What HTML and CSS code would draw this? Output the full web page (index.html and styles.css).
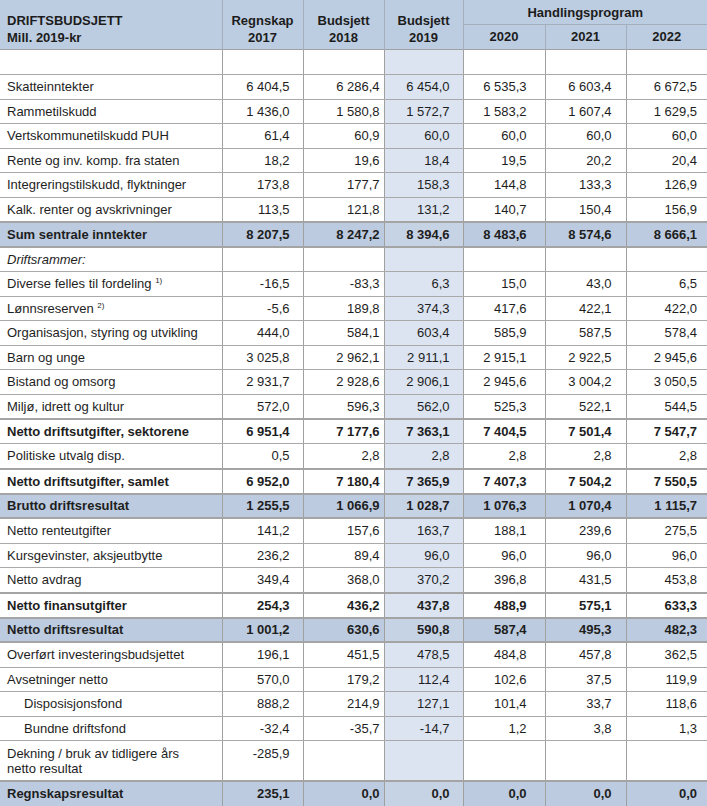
FILE: index.html
```html
<!DOCTYPE html>
<html lang="no">
<head>
<meta charset="utf-8">
<title>Driftsbudsjett</title>
<link rel="stylesheet" href="styles.css">
</head>
<body>
<table class="budget">
  <colgroup>
    <col class="c-label">
    <col class="c-n1">
    <col class="c-n2">
    <col class="c-n3">
    <col class="c-n4">
    <col class="c-n5">
    <col class="c-n6">
  </colgroup>
  <thead>
    <tr class="h1">
      <th rowspan="2" class="title">DRIFTSBUDSJETT<br>Mill. 2019-kr</th>
      <th rowspan="2" class="hc">Regnskap<br>2017</th>
      <th rowspan="2" class="hc">Budsjett<br>2018</th>
      <th rowspan="2" class="hc hl">Budsjett<br>2019</th>
      <th colspan="3" class="group">Handlingsprogram</th>
    </tr>
    <tr class="h2">
      <th class="yr">2020</th>
      <th class="yr">2021</th>
      <th class="yr">2022</th>
    </tr>
  </thead>
  <tbody>
    <tr class="empty"><td></td><td></td><td></td><td class="hl"></td><td></td><td></td><td></td></tr>
    <tr><td>Skatteinntekter</td><td class="n1">6 404,5</td><td class="n2">6 286,4</td><td class="n3 hl">6 454,0</td><td class="n4">6 535,3</td><td class="n5">6 603,4</td><td class="n6">6 672,5</td></tr>
    <tr><td>Rammetilskudd</td><td class="n1">1 436,0</td><td class="n2">1 580,8</td><td class="n3 hl">1 572,7</td><td class="n4">1 583,2</td><td class="n5">1 607,4</td><td class="n6">1 629,5</td></tr>
    <tr><td>Vertskommunetilskudd PUH</td><td class="n1">61,4</td><td class="n2">60,9</td><td class="n3 hl">60,0</td><td class="n4">60,0</td><td class="n5">60,0</td><td class="n6">60,0</td></tr>
    <tr><td>Rente og inv. komp. fra staten</td><td class="n1">18,2</td><td class="n2">19,6</td><td class="n3 hl">18,4</td><td class="n4">19,5</td><td class="n5">20,2</td><td class="n6">20,4</td></tr>
    <tr><td>Integreringstilskudd, flyktninger</td><td class="n1">173,8</td><td class="n2">177,7</td><td class="n3 hl">158,3</td><td class="n4">144,8</td><td class="n5">133,3</td><td class="n6">126,9</td></tr>
    <tr><td>Kalk. renter og avskrivninger</td><td class="n1">113,5</td><td class="n2">121,8</td><td class="n3 hl">131,2</td><td class="n4">140,7</td><td class="n5">150,4</td><td class="n6">156,9</td></tr>
    <tr class="sum"><td>Sum sentrale inntekter</td><td class="n1">8 207,5</td><td class="n2">8 247,2</td><td class="n3 hl">8 394,6</td><td class="n4">8 483,6</td><td class="n5">8 574,6</td><td class="n6">8 666,1</td></tr>
    <tr><td class="it">Driftsrammer:</td><td></td><td></td><td class="hl"></td><td></td><td></td><td></td></tr>
    <tr><td>Diverse felles til fordeling <sup>1)</sup></td><td class="n1">-16,5</td><td class="n2">-83,3</td><td class="n3 hl">6,3</td><td class="n4">15,0</td><td class="n5">43,0</td><td class="n6">6,5</td></tr>
    <tr><td>Lønnsreserven <sup>2)</sup></td><td class="n1">-5,6</td><td class="n2">189,8</td><td class="n3 hl">374,3</td><td class="n4">417,6</td><td class="n5">422,1</td><td class="n6">422,0</td></tr>
    <tr><td>Organisasjon, styring og utvikling</td><td class="n1">444,0</td><td class="n2">584,1</td><td class="n3 hl">603,4</td><td class="n4">585,9</td><td class="n5">587,5</td><td class="n6">578,4</td></tr>
    <tr><td>Barn og unge</td><td class="n1">3 025,8</td><td class="n2">2 962,1</td><td class="n3 hl">2 911,1</td><td class="n4">2 915,1</td><td class="n5">2 922,5</td><td class="n6">2 945,6</td></tr>
    <tr><td>Bistand og omsorg</td><td class="n1">2 931,7</td><td class="n2">2 928,6</td><td class="n3 hl">2 906,1</td><td class="n4">2 945,6</td><td class="n5">3 004,2</td><td class="n6">3 050,5</td></tr>
    <tr><td>Miljø, idrett og kultur</td><td class="n1">572,0</td><td class="n2">596,3</td><td class="n3 hl">562,0</td><td class="n4">525,3</td><td class="n5">522,1</td><td class="n6">544,5</td></tr>
    <tr class="bold"><td>Netto driftsutgifter, sektorene</td><td class="n1">6 951,4</td><td class="n2">7 177,6</td><td class="n3 hl">7 363,1</td><td class="n4">7 404,5</td><td class="n5">7 501,4</td><td class="n6">7 547,7</td></tr>
    <tr><td>Politiske utvalg disp.</td><td class="n1">0,5</td><td class="n2">2,8</td><td class="n3 hl">2,8</td><td class="n4">2,8</td><td class="n5">2,8</td><td class="n6">2,8</td></tr>
    <tr class="bold"><td>Netto driftsutgifter, samlet</td><td class="n1">6 952,0</td><td class="n2">7 180,4</td><td class="n3 hl">7 365,9</td><td class="n4">7 407,3</td><td class="n5">7 504,2</td><td class="n6">7 550,5</td></tr>
    <tr class="sum"><td>Brutto driftsresultat</td><td class="n1">1 255,5</td><td class="n2">1 066,9</td><td class="n3 hl">1 028,7</td><td class="n4">1 076,3</td><td class="n5">1 070,4</td><td class="n6">1 115,7</td></tr>
    <tr><td>Netto renteutgifter</td><td class="n1">141,2</td><td class="n2">157,6</td><td class="n3 hl">163,7</td><td class="n4">188,1</td><td class="n5">239,6</td><td class="n6">275,5</td></tr>
    <tr><td>Kursgevinster, aksjeutbytte</td><td class="n1">236,2</td><td class="n2">89,4</td><td class="n3 hl">96,0</td><td class="n4">96,0</td><td class="n5">96,0</td><td class="n6">96,0</td></tr>
    <tr><td>Netto avdrag</td><td class="n1">349,4</td><td class="n2">368,0</td><td class="n3 hl">370,2</td><td class="n4">396,8</td><td class="n5">431,5</td><td class="n6">453,8</td></tr>
    <tr class="bold"><td>Netto finansutgifter</td><td class="n1">254,3</td><td class="n2">436,2</td><td class="n3 hl">437,8</td><td class="n4">488,9</td><td class="n5">575,1</td><td class="n6">633,3</td></tr>
    <tr class="sum"><td>Netto driftsresultat</td><td class="n1">1 001,2</td><td class="n2">630,6</td><td class="n3 hl">590,8</td><td class="n4">587,4</td><td class="n5">495,3</td><td class="n6">482,3</td></tr>
    <tr><td>Overført investeringsbudsjettet</td><td class="n1">196,1</td><td class="n2">451,5</td><td class="n3 hl">478,5</td><td class="n4">484,8</td><td class="n5">457,8</td><td class="n6">362,5</td></tr>
    <tr><td>Avsetninger netto</td><td class="n1">570,0</td><td class="n2">179,2</td><td class="n3 hl">112,4</td><td class="n4">102,6</td><td class="n5">37,5</td><td class="n6">119,9</td></tr>
    <tr><td class="ind">Disposisjonsfond</td><td class="n1">888,2</td><td class="n2">214,9</td><td class="n3 hl">127,1</td><td class="n4">101,4</td><td class="n5">33,7</td><td class="n6">118,6</td></tr>
    <tr><td class="ind">Bundne driftsfond</td><td class="n1">-32,4</td><td class="n2">-35,7</td><td class="n3 hl">-14,7</td><td class="n4">1,2</td><td class="n5">3,8</td><td class="n6">1,3</td></tr>
    <tr class="two"><td>Dekning / bruk av tidligere års netto resultat</td><td class="n1">-285,9</td><td class="n2"></td><td class="n3 hl"></td><td class="n4"></td><td class="n5"></td><td class="n6"></td></tr>
    <tr class="sum last"><td>Regnskapsresultat</td><td class="n1">235,1</td><td class="n2">0,0</td><td class="n3 hl">0,0</td><td class="n4">0,0</td><td class="n5">0,0</td><td class="n6">0,0</td></tr>
  </tbody>
</table>
</body>
</html>
```
FILE: styles.css
```css
html, body {
  margin: 0;
  padding: 0;
  background: #ffffff;
}

.budget {
  width: 707px;
  table-layout: fixed;
  border-collapse: collapse;
  font-family: "Liberation Sans", Arial, sans-serif;
  font-size: 13px;
  color: #1e1e1e;
}

.c-label { width: 222px; }
.c-n1 { width: 81px; }
.c-n2 { width: 81px; }
.c-n3 { width: 79px; }
.c-n4 { width: 82px; }
.c-n5 { width: 81px; }
.c-n6 { width: 81px; }

/* header */
.budget th {
  background: #bdcde1;
  font-weight: bold;
  padding: 0;
  line-height: 17px;
  border-left: 1px solid #a3afbd;
  color: #1c1c1c;
}
.budget th.title {
  border-left: none;
  text-align: left;
  padding: 0 0 3px 7px;
  vertical-align: bottom;
}
.budget th.hc {
  text-align: center;
  vertical-align: bottom;
  padding-bottom: 3px;
}
.budget .h1 { height: 24px; }
.budget .h2 { height: 25px; }
.budget th.group {
  border-bottom: 1px solid #a3afbd;
  text-align: center;
  vertical-align: middle;
  padding-top: 1px;
}
.budget th.yr {
  text-align: center;
  vertical-align: middle;
}
.budget thead { border-bottom: 1px solid #a0a0a0; }

/* body */
.budget td {
  height: 23.5px;
  padding: 0;
  border-bottom: 1px solid #a9a9a9;
  border-left: 1px solid #a0a0a0;
  white-space: nowrap;
  vertical-align: middle;
}
.budget tr.empty td { height: 24.5px; }
.budget td:first-child {
  border-left: none;
  padding-left: 7px;
}
.budget td.ind { padding-left: 24px; }
.budget td.it { font-style: italic; }
.budget td.hl { background: #dbe4f0; }

.n1, .n2, .n3, .n4, .n5, .n6 { text-align: right; }
.budget td.n1 { padding-right: 13px; }
.budget td.n2 { padding-right: 4px; }
.budget td.n3 { padding-right: 13px; }
.budget td.n4 { padding-right: 18px; }
.budget td.n5 { padding-right: 14px; }
.budget td.n6 { padding-right: 10px; }

sup {
  font-size: 8px;
  vertical-align: 5px;
  line-height: 0;
}

.budget tr.bold td {
  font-weight: bold;
  border-top: 2px solid #a4a4a4;
  height: 23px;
}
.budget tr.sum td {
  font-weight: bold;
  background: #bccbdf;
  border-top: 2px solid #a4a4a4;
  border-bottom: 2px solid #a4a4a4;
  height: 22.5px;
}
.budget tr.sum.last td { height: 23.5px; }
.budget tr.sum td.hl { background: #c6d3e5; }

.budget tr.two td {
  height: 34px;
  vertical-align: top;
  padding-top: 5px;
  line-height: 15px;
  white-space: normal;
}
.budget tr.two td:first-child { padding-right: 40px; }
```
